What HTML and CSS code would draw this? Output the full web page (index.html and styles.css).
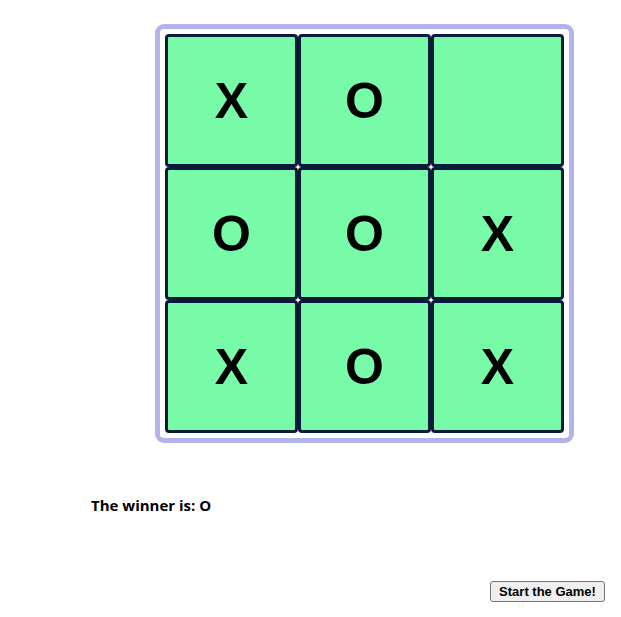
FILE: index.html
```html
<!DOCTYPE html>
<html>
<head>
<meta charset="utf-8">
<link rel="stylesheet" href="styles.css">
</head>
<body>
<div class="app">
  <div class="board">
    <div class="cell">X</div>
    <div class="cell">O</div>
    <div class="cell"></div>
    <div class="cell">O</div>
    <div class="cell">O</div>
    <div class="cell">X</div>
    <div class="cell">X</div>
    <div class="cell">O</div>
    <div class="cell">X</div>
  </div>
  <p class="status">The winner is: O</p>
  <div class="controls">
    <button class="start">Start the Game!</button>
  </div>
</div>
</body>
</html>
```
FILE: styles.css
```css
html, body {
  margin: 0;
  padding: 0;
  background: #ffffff;
}
.app {
  padding: 24px 16px 0 0;
}
.board {
  margin-left: 155px;
  width: 399px;
  display: grid;
  grid-template-columns: repeat(3, 133px);
  grid-template-rows: repeat(3, 133px);
  padding: 5px;
  border: 5px solid #b3b3ec;
  border-radius: 9px;
  background: #ffffff;
}
.cell {
  box-sizing: border-box;
  background: #77fba8;
  border: 3px solid #0a1a3a;
  border-radius: 4px;
  display: flex;
  align-items: center;
  justify-content: center;
  font-family: "Liberation Sans", Arial, sans-serif;
  font-weight: bold;
  font-size: 50px;
  color: #000000;
}
.status {
  margin: 52px 0 0 91px;
  font-family: "Open Sans", sans-serif;
  font-weight: bold;
  font-size: 15px;
  line-height: 20px;
  color: #000;
}
.controls {
  display: flex;
  justify-content: flex-end;
  margin-top: 66px;
}
.start {
  font-family: "Liberation Sans", Arial, sans-serif;
  font-size: 13px;
  font-weight: bold;
  padding: 1px 6px;
  height: 21px;
  width: 115px;
  background: #efefef;
  border: 1px solid #767676;
  border-radius: 3px;
  color: #000;
}
```
